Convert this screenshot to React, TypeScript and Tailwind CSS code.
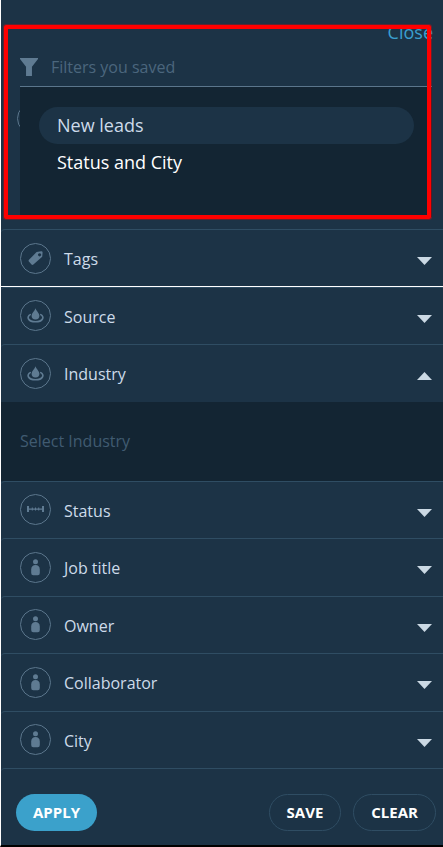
import { useState } from "react";

const TagIcon = () => (
  <svg width="17" height="17" viewBox="0 0 17 17" fill="#5f7b92" fillRule="evenodd">
    <path d="M9.6 2.1 14.2 1.2Q15.6 1.1 15.6 2.6L15.2 6.8 6.4 14.6Q5.4 15.4 4.5 14.5L1.9 11.6Q1.2 10.6 2 9.7ZM12.6 3.2a1.6 1.6 0 1 0 .01 0Z" />
  </svg>
);

const DropIcon = () => (
  <svg width="17" height="17" viewBox="0 0 17 17" fill="none">
    <path d="M8.5 1.2C9.2 3.8 12.4 6 12.4 8.8A3.9 3.7 0 0 1 4.6 8.8C4.6 6 7.8 3.8 8.5 1.2Z" fill="#5f7b92" />
    <path
      d="M3.2 7.6C-.8 9.8 1 14.8 8.5 14.8S17.8 9.8 13.8 7.6"
      stroke="#5f7b92"
      strokeWidth="1.6"
      strokeLinecap="round"
    />
  </svg>
);

const StatusIcon = () => (
  <svg width="17" height="17" viewBox="0 0 17 17" fill="#5f7b92">
    <path d="M0 5h2v6H0zM15 5h2v6h-2zM1 7.4h15v1.4H1z" />
    <path d="M4.8 6.6h1v3h-1zM8 6.6h1v3H8zM11.2 6.6h1v3h-1z" />
  </svg>
);

const PersonIcon = () => (
  <svg width="17" height="17" viewBox="0 0 17 17" fill="#5f7b92">
    <circle cx="8.5" cy="2.8" r="2.5" />
    <path d="M4.2 10.4C4.2 7.6 5.9 6 8.5 6S12.8 7.6 12.8 10.4V14Q12.8 16.3 10.8 16.3H6.2Q4.2 16.3 4.2 14Z" />
  </svg>
);

const FunnelIcon = () => (
  <svg width="18" height="18" viewBox="0 0 17 17" fill="#5f7b92" className="shrink-0">
    <path d="M0 0H17V1L11.3 8.2V17H5.7V8.2L0 1Z" />
  </svg>
);

const filters = [
  { name: "Tags", icon: TagIcon },
  { name: "Source", icon: DropIcon },
  { name: "Industry", icon: DropIcon },
  { name: "Status", icon: StatusIcon },
  { name: "Job title", icon: PersonIcon },
  { name: "Owner", icon: PersonIcon },
  { name: "Collaborator", icon: PersonIcon },
  { name: "City", icon: PersonIcon },
];

const savedFilters = ["New leads", "Status and City"];

const FilterRow = ({
  name,
  icon: Icon,
  isOpen,
  onToggle,
}: {
  name: string;
  icon: () => React.ReactElement;
  isOpen: boolean;
  onToggle: () => void;
}) => (
  <>
    <button
      onClick={onToggle}
      aria-expanded={isOpen}
      className={`flex min-h-14 flex-1 items-center rounded-tl border-t border-[#2f4d63] pr-[11px] pl-[19px] text-left ${
        name === "Tags" ? "shadow-[inset_0_-1px_0_#ffffff]" : ""
      }`}
    >
      <span className="flex size-[31px] items-center justify-center rounded-full border border-[#5b768c]">
        <Icon />
      </span>
      <span className="ml-[13px] flex-1 pt-[2px] text-base text-[#cddbea]">{name}</span>
      <svg width="15" height="8" viewBox="0 0 15 8" fill="#cbd9e4" className="mt-1.5">
        <path d={isOpen ? "M0 8 7.5 0 15 8Z" : "M0 0H15L7.5 8Z"} />
      </svg>
    </button>
    {isOpen && (
      <div className="flex h-[79px] items-center bg-[#132533] px-[19px]">
        <input
          aria-label={`Select ${name}`}
          placeholder={`Select ${name}`}
          className="w-full bg-transparent text-base text-[#cddbea] outline-none placeholder:text-[#405b71]"
        />
      </div>
    )}
  </>
);

const App = () => {
  const [openFilter, setOpenFilter] = useState("Industry");
  const [saved, setSaved] = useState("New leads");

  return (
    <div className="relative flex min-h-screen flex-col border-b-2 border-l border-b-black border-l-white bg-[#1c3346] font-['Open_Sans',sans-serif]">
      <header className="h-[229px] shrink-0">
        <div className="flex justify-end pt-5 pr-[10px]">
          <button className="text-lg leading-6 text-[#3a9fd0]">Close</button>
        </div>
        <div className="mr-[11px] ml-[19px] flex h-[43px] items-center gap-[13px] border-b border-[#5b768c] pt-1">
          <FunnelIcon />
          <input
            aria-label="Filters you saved"
            placeholder="Filters you saved"
            className="w-full bg-transparent text-base text-[#cddbea] outline-none placeholder:text-[#4b667d]"
          />
        </div>
        <div className="relative px-4 pt-4">
          <div className="size-[31px] rounded-full border border-[#5b768c]" />
          <div className="absolute top-0 right-[11px] left-[19px] flex h-[130px] flex-col bg-[#132533] pt-5 pr-[18px] pl-[19px]">
            {savedFilters.map((item) => (
              <button
                key={item}
                onClick={() => setSaved(item)}
                className={`h-[37px] rounded-full px-[18px] pb-[2px] text-left text-lg ${
                  item === saved ? "bg-[#1c3346] text-[#cddbea]" : "text-white"
                }`}
              >
                {item}
              </button>
            ))}
          </div>
        </div>
      </header>

      {filters.map((filter) => (
        <FilterRow
          key={filter.name}
          name={filter.name}
          icon={filter.icon}
          isOpen={openFilter === filter.name}
          onToggle={() => setOpenFilter(openFilter === filter.name ? "" : filter.name)}
        />
      ))}

      <footer className="flex shrink-0 gap-3 rounded-tl border-t border-[#2f4d63] pt-[25px] pr-[7px] pb-[14px] pl-[15px] text-[15px] font-bold text-white">
        <button className="mr-auto h-[37px] rounded-full bg-[#3ba1cb] px-[17px]">APPLY</button>
        <button className="h-[37px] rounded-full border border-[#2f4d63] px-[17px]">SAVE</button>
        <button className="h-[37px] rounded-full border border-[#2f4d63] px-[17px]">CLEAR</button>
      </footer>

      {/* highlight box around the saved filters */}
      <div className="pointer-events-none absolute top-[25px] right-3 left-[3px] h-[194px] rounded-xs border-4 border-[#ff0000] shadow-[0_0_0_1px_#ff00004d]" />
    </div>
  );
};

export default App;
